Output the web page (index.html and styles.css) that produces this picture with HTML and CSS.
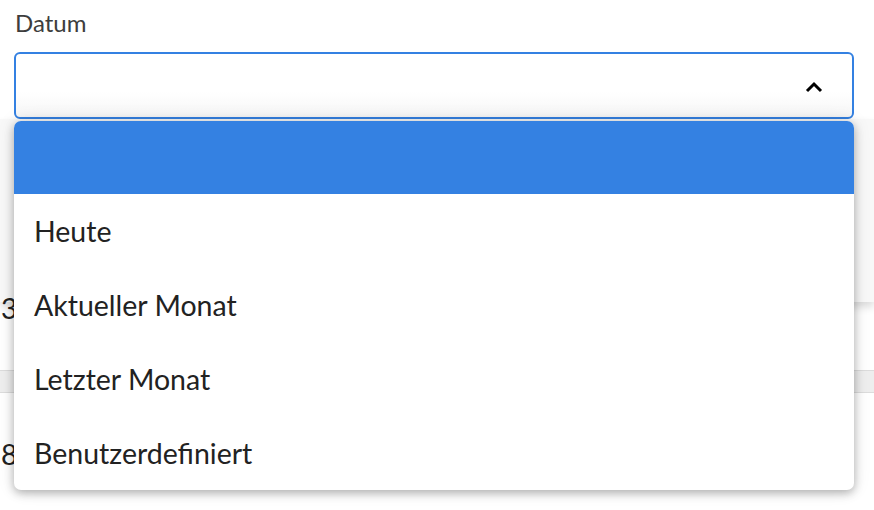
FILE: index.html
```html
<!DOCTYPE html>
<html lang="de">
<head>
<meta charset="utf-8">
<title>Datum</title>
<link rel="stylesheet" href="styles.css">
</head>
<body>
<div class="page">
  <div class="field">
    <label class="label">Datum</label>
    <div class="select">
      <svg class="chevron" width="18" height="12" viewBox="0 0 18 12"><path d="M2 10 L9 3 L16 10" fill="none" stroke="#000" stroke-width="3"/></svg>
    </div>
  </div>
  <div class="behind">
    <div class="panel"></div>
    <div class="row"><span class="num">3</span></div>
    <div class="band"></div>
    <div class="row row-b"><span class="num">8</span></div>
  </div>
  <ul class="menu">
    <li class="opt opt-active"></li>
    <li class="opt">Heute</li>
    <li class="opt">Aktueller Monat</li>
    <li class="opt">Letzter Monat</li>
    <li class="opt">Benutzerdefiniert</li>
  </ul>
</div>
</body>
</html>
```
FILE: styles.css
```css
html, body {
  margin: 0;
  padding: 0;
  background: #fff;
  font-family: Lato, "Open Sans", sans-serif;
}
.page {
  position: relative;
  width: 874px;
  height: 510px;
  overflow: hidden;
}
.field {
  padding: 8px 20px 0 14px;
}
.label {
  display: block;
  font-size: 24px;
  line-height: 30px;
  color: #3d3d3d;
  padding-left: 1px;
  margin-bottom: 14px;
}
.select {
  height: 63px;
  border: 2px solid #3481e2;
  border-radius: 6px;
  background: linear-gradient(#fff 60%, #f6f6f6);
  display: flex;
  align-items: center;
  justify-content: flex-end;
  padding-right: 29px;
}
.chevron {
  display: block;
  margin-top: 2px;
}
.behind {
  display: flex;
  flex-direction: column;
}
.panel {
  height: 183px;
  background: #f8f8f8;
  box-shadow: 0 5px 8px rgba(0,0,0,0.14);
  position: relative;
  z-index: 1;
}
.row {
  height: 68px;
  display: flex;
  align-items: flex-start;
  padding-left: 1px;
  font-size: 28.5px;
  color: #222;
  background: #fff;
}
.row-b {
  height: 110px;
  padding-top: 46px;
  box-sizing: border-box;
}
.num {
  line-height: 30px;
  position: relative;
  z-index: 2;
}
.row:first-of-type .num,
.behind > .row:nth-child(2) .num {
  margin-top: -9px;
}
.band {
  height: 21px;
  background: #eeeeee;
  border-top: 1px solid #dcdcdc;
  border-bottom: 1px solid #dcdcdc;
}
.menu {
  position: absolute;
  top: 121px;
  left: 14px;
  width: 840px;
  margin: 0;
  padding: 0;
  list-style: none;
  background: #fff;
  border-radius: 7px;
  overflow: hidden;
  box-shadow: 0 3px 10px rgba(0,0,0,0.28), 0 0 18px rgba(0,0,0,0.10);
  z-index: 3;
}
.opt {
  height: 74px;
  display: flex;
  align-items: center;
  padding-left: 20px;
  font-size: 28.5px;
  color: #222;
}
.opt-active {
  height: 73px;
  background: #3481e2;
}
```
